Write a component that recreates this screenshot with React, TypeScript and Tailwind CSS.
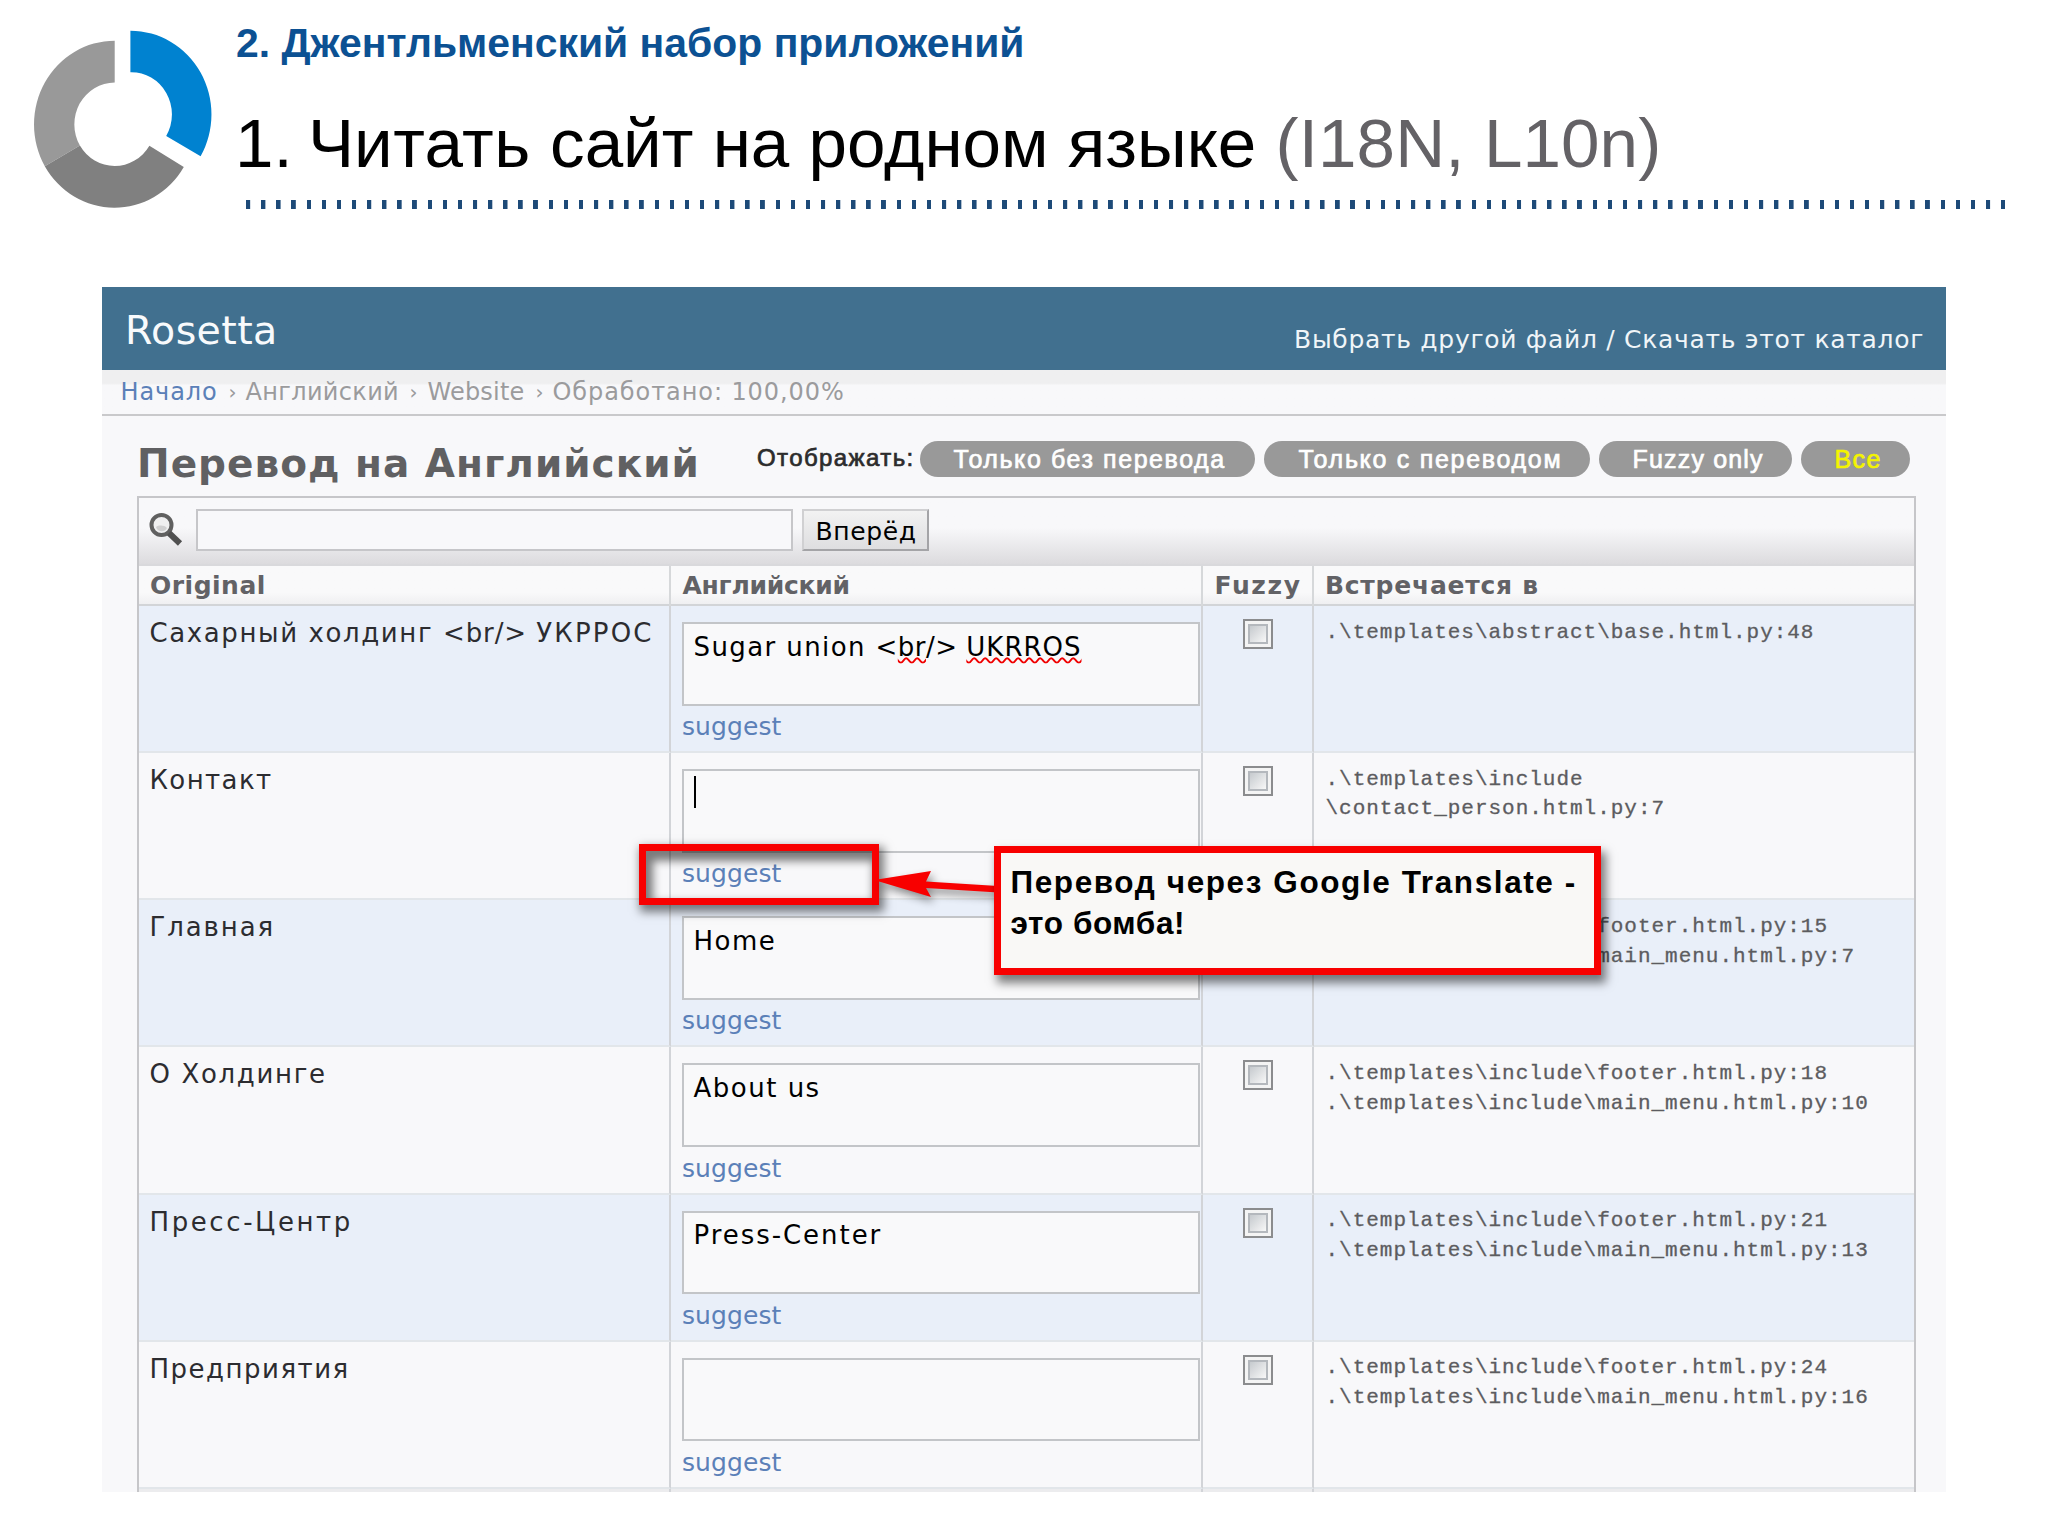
import type { ReactNode } from "react";

type Entry = {
  original: ReactNode;
  originalSpacing: string;
  translation?: ReactNode;
  translationSpacing?: string;
  caret?: boolean;
  files: string[];
};

const squiggle =
  "underline decoration-wavy decoration-[#f00000] decoration-[1.5px] underline-offset-[1px] [text-decoration-skip-ink:none]";

const entries: Entry[] = [
  {
    original: (
      <>
        Сахарный холдинг <span className="tracking-[0.9px]">&lt;br/&gt; </span>
        <span className="tracking-[2.2px]">УКРРОС</span>
      </>
    ),
    originalSpacing: "tracking-[1.6px]",
    translation: (
      <>
        <span className="tracking-[1.4px]">Sugar union </span>
        <span className="tracking-[0.5px]">
          &lt;<span className={squiggle}>br</span>/&gt;{" "}
        </span>
        <span className={squiggle}>UKRROS</span>
      </>
    ),
    translationSpacing: "tracking-[1px]",
    files: [".\\templates\\abstract\\base.html.py:48"],
  },
  {
    original: "Контакт",
    originalSpacing: "tracking-[1.4px]",
    translation: <span className="block h-8 w-0.5 bg-black" />,
    caret: true,
    files: [".\\templates\\include", "\\contact_person.html.py:7"],
  },
  {
    original: "Главная",
    originalSpacing: "tracking-[1.9px]",
    translation: "Home",
    translationSpacing: "tracking-[1.5px]",
    files: [".\\templates\\include\\footer.html.py:15", ".\\templates\\include\\main_menu.html.py:7"],
  },
  {
    original: "О Холдинге",
    originalSpacing: "tracking-[1.65px]",
    translation: "About us",
    translationSpacing: "tracking-[1.5px]",
    files: [".\\templates\\include\\footer.html.py:18", ".\\templates\\include\\main_menu.html.py:10"],
  },
  {
    original: "Пресс-Центр",
    originalSpacing: "tracking-[2.6px]",
    translation: "Press-Center",
    translationSpacing: "tracking-[1.95px]",
    files: [".\\templates\\include\\footer.html.py:21", ".\\templates\\include\\main_menu.html.py:13"],
  },
  {
    original: "Предприятия",
    originalSpacing: "tracking-[1.5px]",
    files: [".\\templates\\include\\footer.html.py:24", ".\\templates\\include\\main_menu.html.py:16"],
  },
];

const filters = [
  { label: "Только без перевода", style: "w-[335px] pl-[33.5px] tracking-[1.58px] text-white", gap: "ml-0" },
  { label: "Только с переводом", style: "w-[326px] pl-[34.5px] tracking-[1.71px] text-white", gap: "ml-[9px]" },
  { label: "Fuzzy only", style: "w-[193px] pl-[33.5px] tracking-[1.18px] text-white", gap: "ml-[9px]" },
  { label: "Все", style: "w-[109px] pl-[34px] tracking-[1.4px] text-[#f4f400]", gap: "ml-[8.5px]" },
];

const columns = "grid grid-cols-[531.5px_532px_111px_1fr]";

function Logo() {
  return (
    <svg className="absolute left-[30px] top-[26px]" width="186" height="186" viewBox="30 26 186 186">
      <path fill="#999999" d="M114.7 40.7A80.7 83.7 0 0 0 44.8 166.2L79.9 145.6A40.6 42 0 0 1 114.7 82.4Z" />
      <path fill="#808080" d="M44.8 166.2A80.7 83.7 0 0 0 183.8 167L149.4 145.8A40.6 42 0 0 1 79.9 145.6Z" />
      <path fill="#0082d0" d="M130.4 30.7A81.2 83.7 0 0 1 200.6 156.2L166.2 136A40.6 42.2 0 0 0 130.4 72.2Z" />
    </svg>
  );
}

function SearchIcon() {
  return (
    <svg width="34" height="34" viewBox="0 0 34 34" fill="none" className="mt-[15px] ml-[10px] shrink-0">
      <circle cx="12.5" cy="12" r="10" fill="#efeff0" stroke="#606060" strokeWidth="4" />
      <path d="M7 14a6 6 0 0 0 11 1c-3-3-8-3-11-1Z" fill="#cfcfd0" />
      <path d="M20 20 31 30.5" stroke="#505050" strokeWidth="6" />
    </svg>
  );
}

function Checkbox() {
  return (
    <div className="h-[30px] w-[30px] border-2 border-[#8b8c8e] bg-[#f4f4f4] p-[3px]">
      <div className="h-full w-full border-2 border-[#b4b8bd] bg-linear-to-br from-[#c6cace] to-[#f8f8f8]" />
    </div>
  );
}

function Row({ entry, odd }: { entry: Entry; odd: boolean }) {
  return (
    <div className={`${columns} h-[147.15px] shrink-0 ${odd ? "bg-[#e9eff9]" : "bg-[#f8f8fa]"}`}>
      <div className="border-r-2 border-b-2 border-r-[#d2d4d8] border-b-[#e2e6ea] pt-3 pl-[10.5px]">
        <div className={`text-[26px] leading-[30px] whitespace-nowrap text-[#2c2c30] ${entry.originalSpacing}`}>
          {entry.original}
        </div>
      </div>
      <div className="border-r-2 border-b-2 border-r-[#d2d4d8] border-b-[#e2e6ea] pt-4 pl-[11.5px]">
        <div
          className={`h-[83.5px] w-[518px] border-2 border-[#c3c5c8] bg-[#f9f9fa] pl-[9.5px] text-[26px] leading-[30px] whitespace-nowrap text-black ${
            entry.caret ? "pt-[4.5px]" : "pt-[7.5px]"
          } ${entry.translationSpacing ?? ""}`}
        >
          {entry.translation}
        </div>
        <div className="mt-[6.7px] text-[25px] leading-[30px] tracking-[0.1px] text-[#5b80b8]">suggest</div>
      </div>
      <div className="border-r-2 border-b-2 border-r-[#d2d4d8] border-b-[#e2e6ea] pt-[13px] pl-[40.5px]">
        <Checkbox />
      </div>
      <div className="border-b-2 border-b-[#e2e6ea] pt-[11.5px] pl-[12px] font-['Liberation_Mono',monospace] text-[21px] leading-[29.8px] tracking-[0.98px] whitespace-pre text-[#5c5c60] [-webkit-text-stroke:0.3px_#5c5c60]">
        {entry.files.map((file) => (
          <div key={file}>{file}</div>
        ))}
      </div>
    </div>
  );
}

function Annotations() {
  return (
    <>
      <div className="absolute top-[844px] left-[639px] h-[61px] w-[240px] border-[7px] border-[#f80000] shadow-[3px_5px_9px_2px_rgba(0,0,0,0.5),inset_4px_7px_9px_3px_rgba(0,0,0,0.5)]" />
      <svg
        className="absolute top-[860px] left-[870px] drop-shadow-[3px_5px_4px_rgba(0,0,0,0.45)]"
        width="130"
        height="50"
        viewBox="870 860 130 50"
      >
        <path d="M874 880 931 871 926 881.5 998 886V892.5L926 888 931 897Z" fill="#f80000" />
      </svg>
      <div className="absolute top-[846px] left-[994px] h-[129px] w-[607px] border-[7px] border-[#f80000] bg-[#f9f8f6] pt-[9px] pl-[9.5px] font-['Liberation_Sans',sans-serif] text-[31.5px] leading-[40.7px] font-bold whitespace-nowrap text-black shadow-[4px_7px_9px_1px_rgba(0,0,0,0.5)]">
        <div className="tracking-[1.6px]">Перевод через Google Translate -</div>
        <div className="tracking-[0.6px]">это бомба!</div>
      </div>
    </>
  );
}

export default function App() {
  return (
    <div className="relative h-[1536px] w-[2048px] overflow-hidden bg-white font-['DejaVu_Sans',sans-serif]">
      <header className="relative h-[287px] pl-[235px] font-['Liberation_Sans',sans-serif]">
        <Logo />
        <h2 className="pt-[18px] pl-px text-[40.9px] leading-[50px] font-bold whitespace-nowrap text-[#0c5193]">
          2. Джентльменский набор приложений
        </h2>
        <h1 className="mt-[35px] text-[69.2px] leading-[80px] whitespace-nowrap text-black">
          <span className="[word-spacing:-4px]">1. Ч</span>
          <span className="tracking-[0.5px]">итать</span> сайт на родном языке{" "}
          <span className="tracking-[0.1px] text-[#646266]">(I18N, L10n)</span>
        </h1>
        <div className="mt-[17px] ml-[10.5px] h-[9px] w-[1759px] bg-[repeating-linear-gradient(90deg,#1d4a78_0px,#1d4a78_4px,#ffffff_4.6px,#ffffff_15.13px)]" />
      </header>

      <main className="ml-[102px] flex h-[1205px] w-[1844px] flex-col overflow-hidden bg-[#f8f8fa]">
        <div className="flex h-[83px] shrink-0 justify-between bg-[#41708f] pr-[22px] pl-[23px] whitespace-nowrap">
          <div className="mt-[17.5px] text-[39.5px] leading-[50px] tracking-[0.4px] text-[#f8fafc]">Rosetta</div>
          <div className="mt-[33px] text-[25px] leading-[40px] tracking-[0.7px] text-[#f0f5f8]">
            Выбрать другой файл / Скачать этот каталог
          </div>
        </div>

        <nav className="flex h-[46px] shrink-0 border-b-2 border-[#c9c9cb] bg-linear-to-b from-[#efeff0] from-30% to-[#f8f8fa] to-35% pl-[18.5px] text-[24px] leading-[40px] whitespace-nowrap text-[#9b9b9d]">
          <span className="w-[108px] pt-[1.5px] tracking-[0.9px] text-[#5b80b8]">Начало</span>
          <span className="w-[17px] pt-[1.5px] text-[20px]">›</span>
          <span className="w-[164px] pt-[1.5px] tracking-[0.34px]">Английский</span>
          <span className="w-[18px] pt-[1.5px] text-[20px]">›</span>
          <span className="w-[108px] pt-[1.5px] tracking-[0.18px]">Website</span>
          <span className="w-[17px] pt-[1.5px] text-[20px]">›</span>
          <span className="pt-[1.5px] tracking-[0.92px]">Обработано: 100,00%</span>
        </nav>

        <div className="flex h-[80px] shrink-0 whitespace-nowrap">
          <div className="w-[655px] pt-[20.5px] pl-[35px] text-[39px] leading-[54px] font-bold tracking-[1px] text-[#606062]">
            Перевод на Английский
          </div>
          <div className="flex pt-[24.5px] font-['Liberation_Sans',sans-serif]">
            <span className="-mt-px w-[163px] text-[24px] leading-[36px] tracking-[1.4px] text-[#2c2c2c] [-webkit-text-stroke:0.7px_#2c2c2c]">
              Отображать:
            </span>
            {filters.map((f) => (
              <span
                key={f.label}
                className={`h-9 rounded-full bg-[#999999] text-[25px] leading-[37px] [-webkit-text-stroke:0.7px_currentColor] ${f.style} ${f.gap}`}
              >
                {f.label}
              </span>
            ))}
          </div>
        </div>

        <div className="ml-[35px] flex w-[1779px] grow flex-col overflow-hidden border-x-2 border-t-2 border-[#c6c6c9]">
          <div className="flex h-[68px] shrink-0 border-b-2 border-[#d9d9dc] bg-linear-to-b from-[#f8f8fa] from-45% to-[#dcdbde]">
            <SearchIcon />
            <div className="mt-[11px] ml-[12.5px] h-[42px] w-[597px] border-2 border-[#c6c6c9] bg-[#f8f8fa]" />
            <div className="mt-[11px] ml-[9px] h-[42px] w-[127px] border-2 border-t-[#d0d0d2] border-r-[#a4a4a7] border-b-[#a4a4a7] border-l-[#d0d0d2] bg-linear-to-b from-[#f2f2f2] to-[#dedee0] pt-[1px] pl-[12px] text-[25px] leading-[40px] tracking-[0.6px] text-black">
              Вперёд
            </div>
          </div>
          <div
            className={`${columns} h-[40px] shrink-0 border-b-2 border-[#d2d4d7] bg-linear-to-b from-[#f9f9fa] from-70% to-[#efeff1] text-[25px] leading-[40px] font-bold whitespace-nowrap text-[#626266]`}
          >
            <div className="border-r-2 border-[#d6d8da] pl-[11px] tracking-[0.5px]">Original</div>
            <div className="border-r-2 border-[#d6d8da] pl-[12px] tracking-[-0.26px]">Английский</div>
            <div className="border-r-2 border-[#d6d8da] pl-[12px] tracking-[1.6px]">Fuzzy</div>
            <div className="pl-[11.5px] tracking-[0.75px]">Встречается в</div>
          </div>
          {entries.map((entry, i) => (
            <Row key={i} entry={entry} odd={i % 2 === 0} />
          ))}
          <div className={`${columns} h-[4px] shrink-0 bg-[#ececee]`}>
            <div className="border-r-2 border-[#d2d4d8]" />
            <div className="border-r-2 border-[#d2d4d8]" />
            <div className="border-r-2 border-[#d2d4d8]" />
          </div>
        </div>
      </main>
      <Annotations />
    </div>
  );
}
